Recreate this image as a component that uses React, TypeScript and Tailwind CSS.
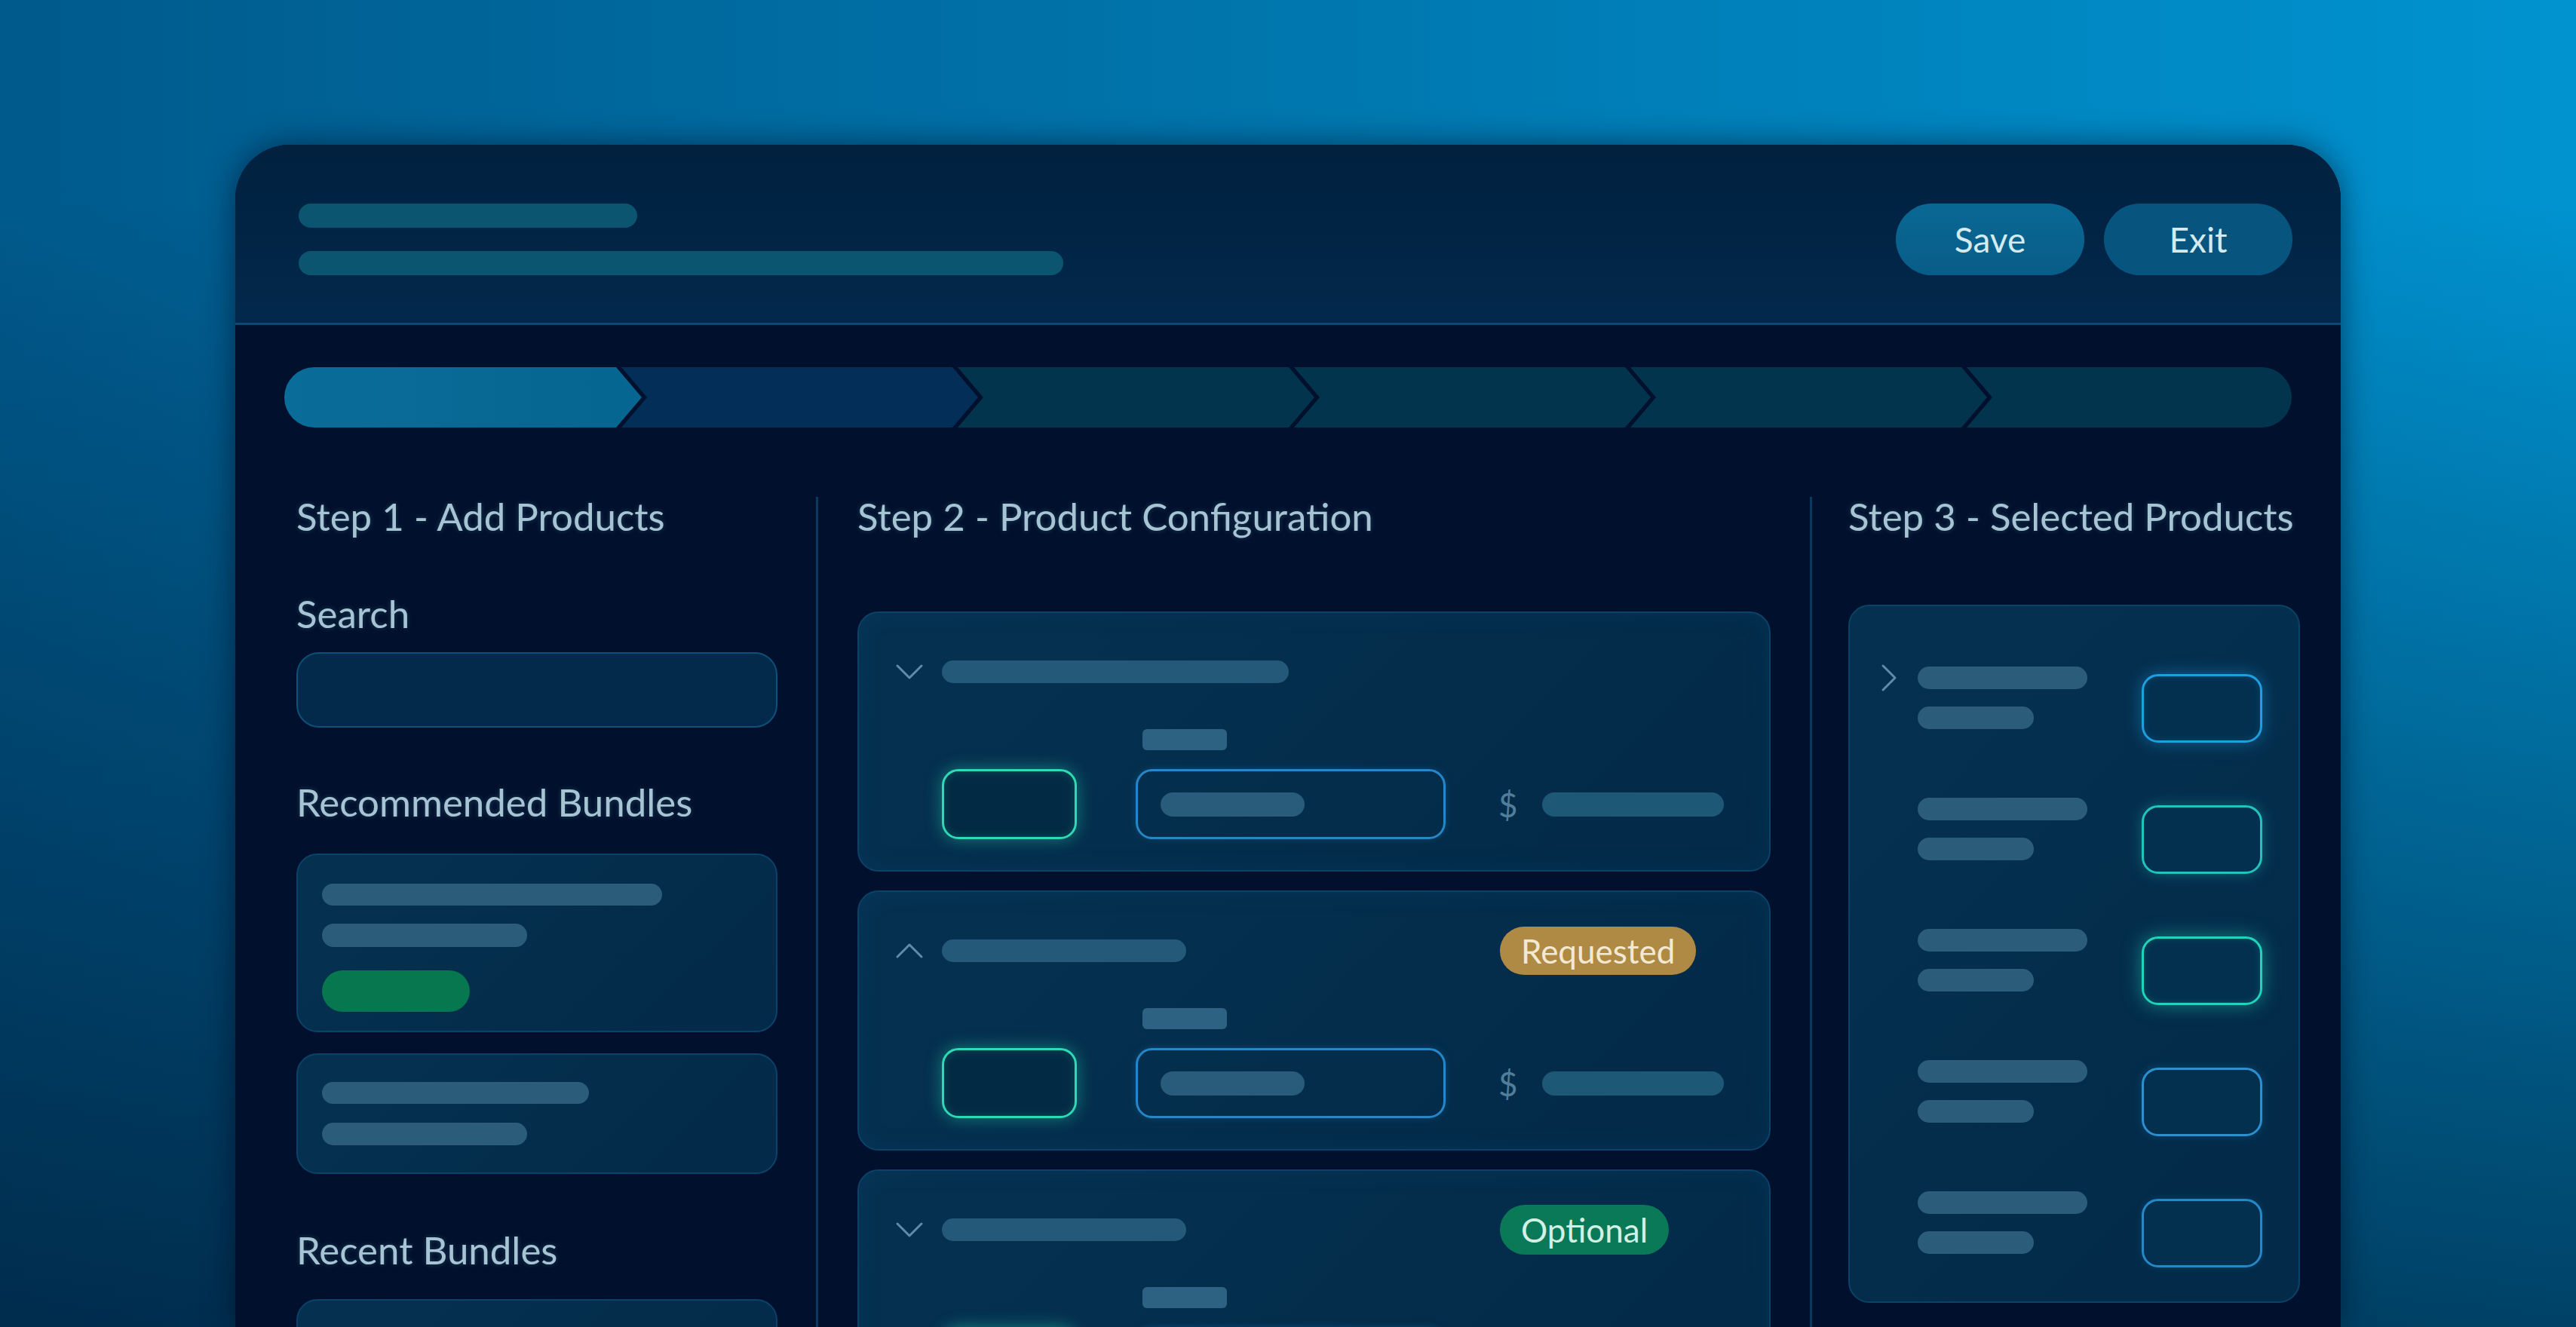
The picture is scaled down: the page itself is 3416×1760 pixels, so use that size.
import React from "react";

function Chevron({ dir }: { dir: "down" | "up" | "right" }) {
  if (dir === "right") {
    return (
      <svg width="22" height="38" viewBox="0 0 22 38" className="shrink-0">
        <polyline points="3,3 19,19 3,35" fill="none" stroke="#5f8cab" strokeWidth="3" strokeLinecap="round" strokeLinejoin="round" />
      </svg>
    );
  }
  return (
    <svg width="38" height="22" viewBox="0 0 38 22" className={dir === "up" ? "shrink-0 rotate-180" : "shrink-0"}>
      <polyline points="3,3 19,19 35,3" fill="none" stroke="#5f8cab" strokeWidth="3" strokeLinecap="round" strokeLinejoin="round" />
    </svg>
  );
}

function ConfigCard({ dir, titleW, badge, hidePrice }: { dir: "down" | "up"; titleW: string; badge?: React.ReactNode; hidePrice?: boolean }) {
  return (
    <div className="h-[345px] shrink-0 rounded-[28px] border-2 border-[#0b4268] bg-[linear-gradient(135deg,#053150,#032a48)] pl-[48px] pt-[46px] shadow-[inset_0_0_30px_rgba(20,90,140,0.15)]">
      <div className="flex h-[64px] items-center">
        <div className="flex w-[62px] items-center">
          <Chevron dir={dir} />
        </div>
        <div className="w-[740px]">
          <div className={`h-[30px] rounded-full bg-[#25597a] ${titleW}`} />
        </div>
        {badge}
      </div>
      <div className="mt-[44px] flex items-end pl-[62px]">
        <div className="h-[93px] w-[179px] rounded-[22px] border-[3px] border-[#2ddab4] bg-[#032a44] shadow-[0_0_22px_rgba(40,220,180,0.45),inset_0_0_12px_rgba(40,220,180,0.2)]" />
        <div className="ml-[78px] flex flex-col">
          <div className="mb-[25px] ml-[9px] h-[28px] w-[112px] rounded-[6px] bg-[#2d6283]" />
          <div className="flex h-[93px] w-[411px] items-center rounded-[22px] border-[3px] border-[#2687c8] pl-[30px] shadow-[0_0_10px_rgba(40,140,210,0.25)]">
            <div className="h-[32px] w-[191px] rounded-full bg-[#295b7a]" />
          </div>
        </div>
        {hidePrice ? null : (
          <div className="ml-[70px] flex h-[93px] items-center gap-[32px]">
            <span className="text-[44px] leading-none text-[#4f7e9c]">$</span>
            <div className="h-[32px] w-[241px] rounded-full bg-[#1d5877]" />
          </div>
        )}
      </div>
    </div>
  );
}

function SelRow({ chevron, box }: { chevron?: boolean; box: string }) {
  return (
    <div className="flex h-[101px] items-start">
      <div className="flex h-[30px] w-[49px] items-center">{chevron ? <Chevron dir="right" /> : null}</div>
      <div className="flex flex-col gap-[23px]">
        <div className="h-[30px] w-[225px] rounded-full bg-[#2b5d7b]" />
        <div className="h-[30px] w-[154px] rounded-full bg-[#2b5d7b]" />
      </div>
      <div className={`ml-auto mt-[10px] h-[91px] w-[160px] rounded-[22px] border-[3px] bg-[#03304f] ${box}`} />
    </div>
  );
}

export default function App() {
  const heading = "text-[51px] leading-none text-[#a6c4d3] [text-shadow:0_0_6px_rgba(140,190,215,0.25)] whitespace-nowrap";
  const mid = "[clip-path:polygon(0_0,calc(100%_-_34px)_0,100%_50%,calc(100%_-_34px)_100%,0_100%,34px_50%)]";
  return (
    <div className="relative h-[1760px] w-[3416px] overflow-hidden bg-[linear-gradient(to_bottom,rgba(0,16,38,0)_15%,rgba(0,16,38,0.62)_100%),linear-gradient(to_right,#005a8c,#0093d0)] font-[Lato,sans-serif]">
      <div className="ml-[312px] mt-[192px] h-[1568px] w-[2792px] overflow-hidden rounded-t-[72px] bg-[#01112d] shadow-[0_0_40px_rgba(0,10,30,0.55)]">
        {/* Header */}
        <div className="flex h-[239px] items-center border-b-[3px] border-[#0a4a76] bg-[linear-gradient(to_bottom,#01213f,#02284b)] pl-[84px] pr-[64px] pt-[14px]">
          <div className="flex flex-col">
            <div className="h-[32px] w-[449px] rounded-full bg-[#0b5571]" />
            <div className="mt-[31px] h-[32px] w-[1014px] rounded-full bg-[#0b5571]" />
          </div>
          <div className="ml-auto flex items-center gap-[26px]">
            <div className="flex h-[95px] w-[250px] items-center justify-center rounded-full bg-[linear-gradient(to_bottom,#0a6894,#085d88)] text-[46px] text-[#d4eaf1]">Save</div>
            <div className="flex h-[95px] w-[250px] items-center justify-center rounded-full bg-[#07547f] text-[46px] text-[#d4eaf1]">Exit</div>
          </div>
        </div>

        {/* Stepper */}
        <div className="mt-[56px] flex h-[80px] px-[65px]">
          <div className="h-[80px] w-[474px] shrink-0 rounded-l-[40px] bg-[linear-gradient(to_right,#0a6d99,#066591)] [clip-path:polygon(0_0,calc(100%_-_34px)_0,100%_50%,calc(100%_-_34px)_100%,0_100%)]" />
          <div className={`-ml-[27px] h-[80px] w-[473px] shrink-0 bg-[#022e58] ${mid}`} />
          <div className={`-ml-[27px] h-[80px] w-[473px] shrink-0 bg-[#02344e] ${mid}`} />
          <div className={`-ml-[27px] h-[80px] w-[473px] shrink-0 bg-[#02344e] ${mid}`} />
          <div className={`-ml-[27px] h-[80px] w-[473px] shrink-0 bg-[#02344e] ${mid}`} />
          <div className="-ml-[27px] h-[80px] flex-1 rounded-r-[40px] bg-[#02344e] [clip-path:polygon(0_0,100%_0,100%_100%,0_100%,34px_50%)]" />
        </div>

        {/* Columns */}
        <div className="mt-[92px] flex h-[1200px] pl-[81px] pr-[54px]">
          {/* Col 1 */}
          <div className="flex w-[638px] shrink-0 flex-col">
            <div className={heading}>Step 1 - Add Products</div>
            <div className={`${heading} mt-[78px]`}>Search</div>
            <div className="mt-[26px] h-[100px] shrink-0 rounded-[30px] border-2 border-[#0d5079] bg-[#032a4a]" />
            <div className={`${heading} mt-[73px]`}>Recommended Bundles</div>
            <div className="mt-[43px] h-[237px] shrink-0 rounded-[28px] border-2 border-[#0b4268] bg-[linear-gradient(135deg,#053150,#032a48)] pl-[32px] pt-[38px]">
              <div className="h-[29px] w-[451px] rounded-full bg-[#2b5d7b]" />
              <div className="mt-[24px] h-[31px] w-[272px] rounded-full bg-[#2b5d7b]" />
              <div className="mt-[31px] h-[55px] w-[196px] rounded-full bg-[#06774f]" />
            </div>
            <div className="mt-[28px] h-[160px] shrink-0 rounded-[28px] border-2 border-[#0b4268] bg-[linear-gradient(135deg,#053150,#032a48)] pl-[32px] pt-[36px]">
              <div className="h-[29px] w-[354px] rounded-full bg-[#2b5d7b]" />
              <div className="mt-[25px] h-[30px] w-[272px] rounded-full bg-[#2b5d7b]" />
            </div>
            <div className={`${heading} mt-[75px]`}>Recent Bundles</div>
            <div className="mt-[40px] h-[237px] shrink-0 rounded-[28px] border-2 border-[#0b4268] bg-[linear-gradient(135deg,#053150,#032a48)]" />
          </div>

          <div className="ml-[51px] w-[3px] shrink-0 bg-[#0b3a5e]" />

          {/* Col 2 */}
          <div className="ml-[52px] flex w-[1211px] shrink-0 flex-col">
            <div className={heading}>Step 2 - Product Configuration</div>
            <div className="mt-[101px] flex flex-col gap-[25px]">
              <ConfigCard dir="down" titleW="w-[460px]" />
              <ConfigCard
                dir="up"
                titleW="w-[324px]"
                badge={
                  <div className="flex h-[64px] items-center rounded-full bg-[#ae8a45] px-[28px] text-[44px] text-[#f3e9d2]">Requested</div>
                }
              />
              <ConfigCard
                dir="down"
                titleW="w-[324px]"
                hidePrice
                badge={
                  <div className="flex h-[66px] items-center rounded-full bg-[#0a7958] px-[28px] text-[44px] text-[#d4f0e4]">Optional</div>
                }
              />
            </div>
          </div>

          <div className="ml-[52px] w-[3px] shrink-0 bg-[#0b3a5e]" />

          {/* Col 3 */}
          <div className="ml-[48px] flex w-[599px] shrink-0 flex-col">
            <div className={heading}>Step 3 - Selected Products</div>
            <div className="mt-[92px] flex h-[926px] shrink-0 flex-col gap-[73px] rounded-[28px] border-2 border-[#0b4268] bg-[linear-gradient(135deg,#053150,#032a48)] pl-[41px] pr-[48px] pt-[80px]">
              <SelRow chevron box="border-[#1e9fe0] shadow-[0_0_22px_rgba(30,160,230,0.45),inset_0_0_10px_rgba(30,160,230,0.2)]" />
              <SelRow box="border-[#20c4bd] shadow-[0_0_18px_rgba(32,200,190,0.35)]" />
              <SelRow box="border-[#1fd4bb] shadow-[0_0_24px_rgba(32,215,185,0.5),inset_0_0_10px_rgba(32,215,185,0.2)]" />
              <SelRow box="border-[#2a90cf] shadow-[0_0_12px_rgba(40,140,210,0.25)]" />
              <SelRow box="border-[#2788c8] shadow-[0_0_10px_rgba(40,140,210,0.2)]" />
            </div>
          </div>
        </div>
      </div>
    </div>
  );
}
